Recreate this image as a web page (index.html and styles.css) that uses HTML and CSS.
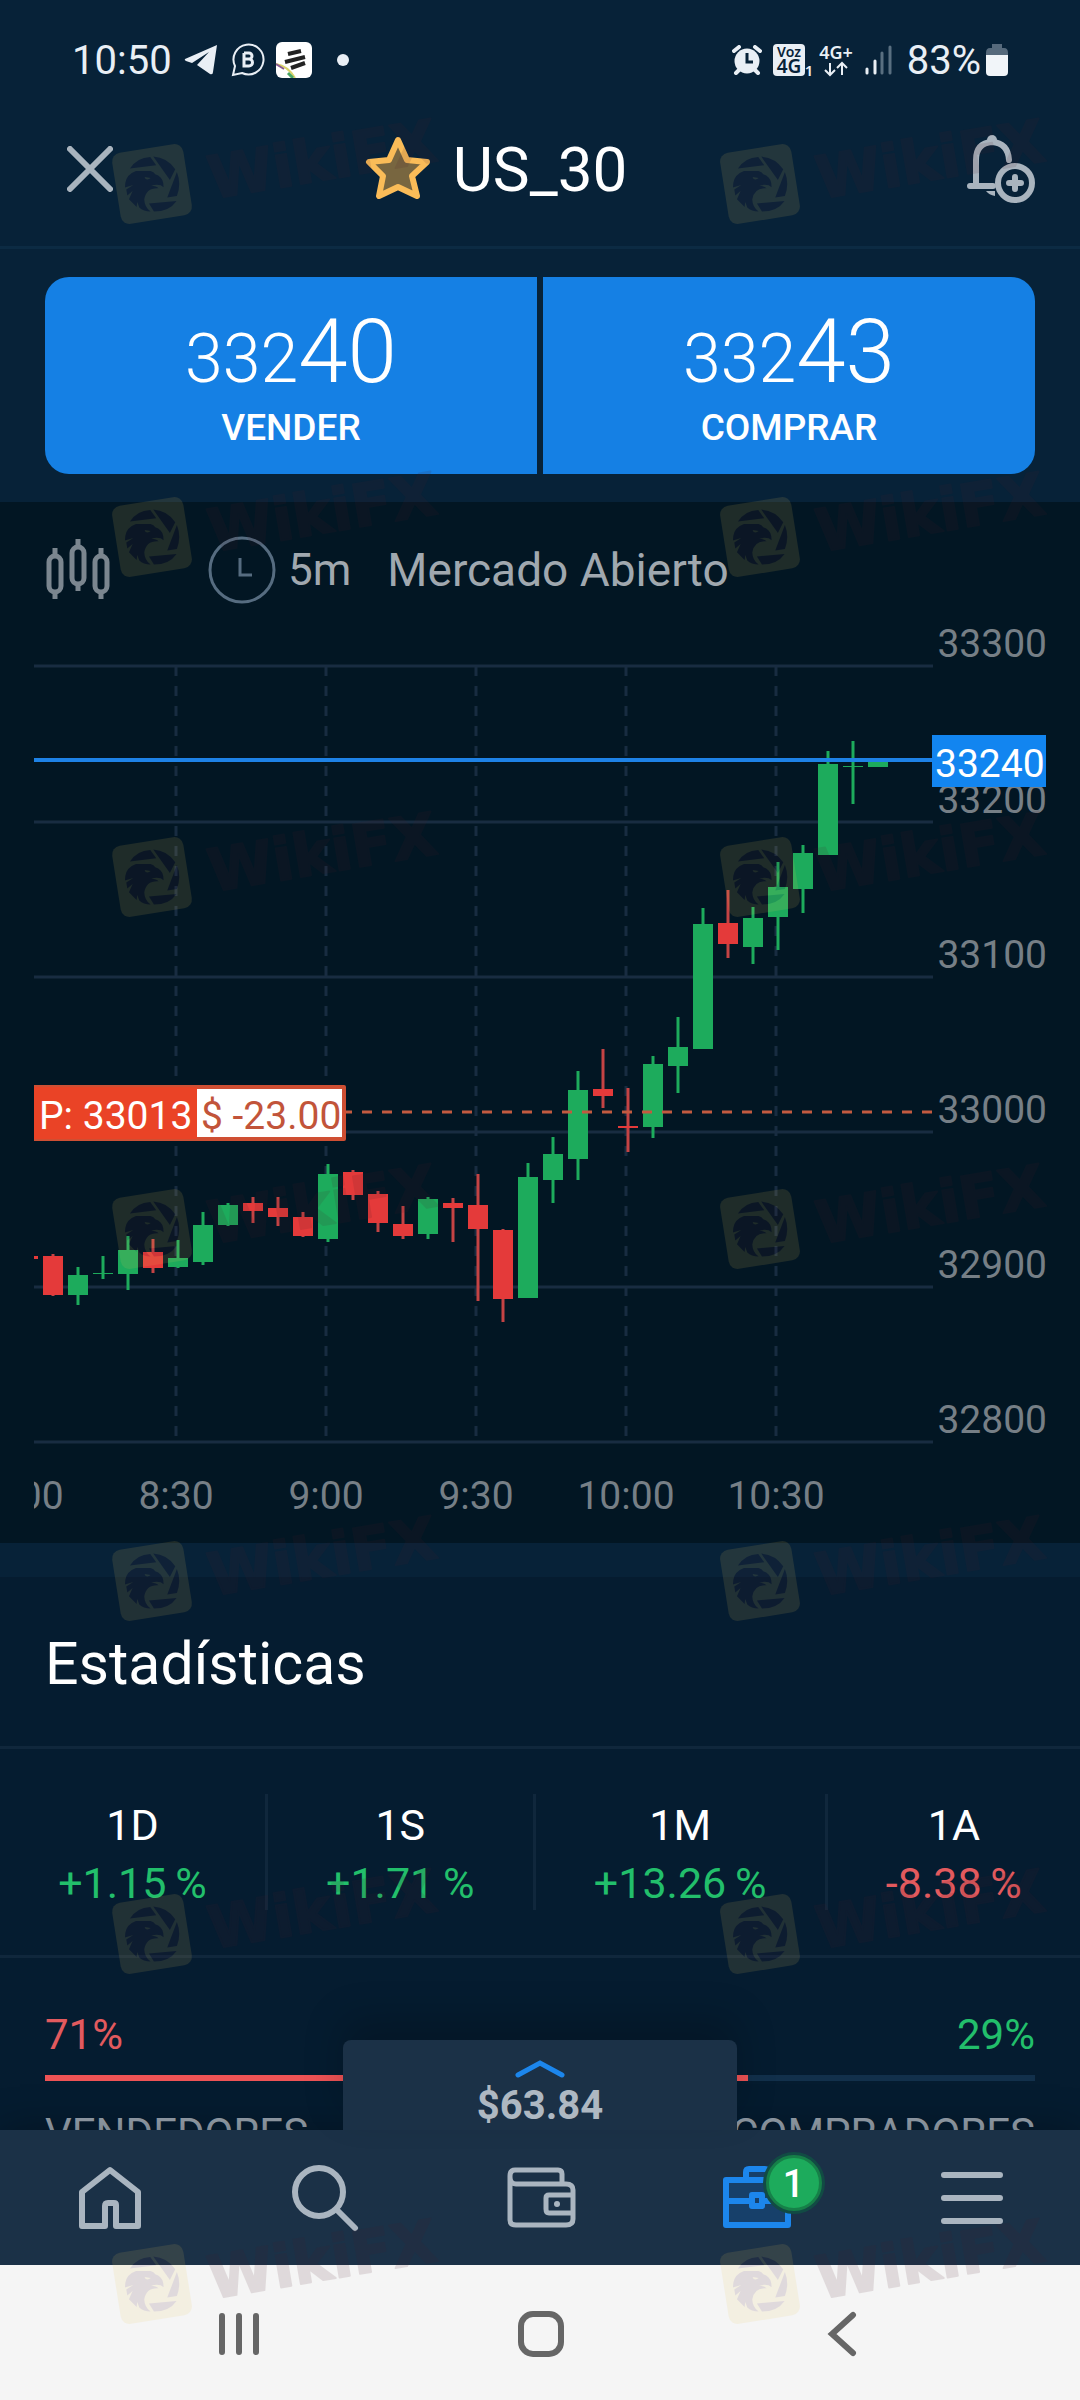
FILE: index.html
```html
<!DOCTYPE html>
<html lang="es">
<head>
    <meta charset="UTF-8">
    <meta name="viewport" content="width=device-width, initial-scale=1.0">
    <title>US_30</title>
    <link rel="stylesheet" href="styles.css">
</head>
<body>
    <div class="status-bar">
        <span class="clock">10:50</span>
        <svg class="telegram" width="34" height="32" viewBox="0 0 34 32"><path d="M33 1 1 15Q0 16 2 17L8 19 25 8 13 21 26 30Q29 31 29 28Z" fill="#e9eff5"/></svg>
        <svg class="whatsapp" width="34" height="34" viewBox="0 0 34 34" fill="none" stroke="#e9eff5" stroke-width="2"><path d="M2 32 4 23A15 15 0 1 1 11 30Z"/><path stroke-width="3" d="M13 10V23H18A3.500 3.500 0 0 0 18 16H13M13 10H18A3 3 0 0 1 18 16"/></svg>
        <svg width="36" height="36" viewBox="0 0 36 36"><rect width="36" height="36" rx="6" fill="#fff"/><path d="M12 12 25 9M9 20 29 15M15 26 29 21" stroke="#222" stroke-width="4"/><path d="M0 22Q12 24 19 36" fill="none" stroke="#d9d36a" stroke-width="2"/><path d="M0 22 8 27" stroke="#8a5a90" stroke-width="2"/><path d="M12 31 17 36" stroke="#4aa564" stroke-width="3"/></svg>
        <span class="dot"></span>
        <div class="status-right">
            <svg width="30" height="30" viewBox="0 0 30 30"><circle cx="15" cy="16" r="12.500" fill="#e9eff5"/><path d="M2 6 7 2M28 6 23 2M4 28 8 24M26 28 22 24" stroke="#e9eff5" stroke-width="4" stroke-linecap="round"/><path d="M15 8V17H21" fill="none" stroke="#072238" stroke-width="3"/></svg>
            <svg class="volte" width="40" height="33" viewBox="0 0 40 33"><rect width="32" height="32" rx="4" fill="#e9eff5"/><text x="16" y="13" class="volte-top">Voz</text><text x="16" y="29" class="volte-main">4G</text><text x="36" y="32" class="volte-sub">1</text></svg>
            <svg class="lte" width="34" height="33" viewBox="0 0 34 33"><text x="17" y="15" class="lte-text">4G+</text><path d="M11 19V31M6 26 11 31 16 26M23 31V19M18 24 23 19 28 24" fill="none" stroke="#e9eff5" stroke-width="2"/></svg>
            <svg class="signal" width="28" height="30" viewBox="0 0 28 30" stroke-width="3" stroke-linecap="round"><path d="M2 24V28M10 16V28" stroke="#e9eff5"/><path d="M17 8V28M25 2V28" stroke="#596f80"/></svg>
            <span class="battery-level">83%</span>
            <svg width="22" height="32" viewBox="0 0 22 32"><path d="M6 0H16V4H18Q22 4 22 9V12H0V9Q0 4 4 4H6Z" fill="#566a7c"/><path d="M0 11H22V28Q22 32 18 32H4Q0 32 0 28Z" fill="#f1f5f9"/></svg>
        </div>
    </div>

    <header class="header">
        <button class="close" aria-label="Cerrar">
            <svg width="46" height="46" viewBox="0 0 46 46"><path d="M3 3 43 43M43 3 3 43" stroke="#a9b4be" stroke-width="6" stroke-linecap="round"/></svg>
        </button>
        <h1>
            <svg width="66" height="66" viewBox="0 0 66 66"><path d="M33 4 42 24 62 26 47 40 52 60 33 51 14 60 18 40 4 26 24 24Z" fill="#786640" stroke="#fabc58" stroke-width="6" stroke-linejoin="round"/></svg>
            US_30
        </h1>
        <button class="alert" aria-label="Crear alerta">
            <svg width="70" height="70" viewBox="0 0 70 70" fill="none" stroke="#a9b4be" stroke-width="6"><path d="M27 52H4M10 52V26Q10 9 26 8 42 9 43 26" stroke-linecap="round"/><circle cx="26" cy="6" r="5" fill="#a9b4be" stroke="none"/><path d="M20 57Q23 61 29 62V57Z" fill="#a9b4be" stroke="none"/><circle cx="49" cy="49" r="17"/><path d="M49 43V55M43 49H55" stroke-linecap="round"/></svg>
        </button>
    </header>

    <main>
        <div class="prices">
            <button class="price sell"><span class="quote">332<b>40</b></span>VENDER</button>
            <button class="price buy"><span class="quote">332<b>43</b></span>COMPRAR</button>
        </div>

        <section class="chart">
            <div class="toolbar">
                <button class="chart-type" aria-label="Tipo de gráfico">
                    <svg width="64" height="62" viewBox="0 0 64 62" fill="none" stroke="#7b868f" stroke-width="5"><rect x="3" y="17" width="12" height="36" rx="6"/><rect x="26" y="8" width="12" height="37" rx="6"/><rect x="49" y="17" width="12" height="36" rx="6"/><path d="M9 9V17M9 53V60M32 0V8M32 45V52M55 9V17M55 53V60"/></svg>
                </button>
                <button class="interval">
                    <svg width="68" height="68" viewBox="0 0 68 68" fill="none" stroke="#566c80" stroke-width="3"><circle cx="34" cy="34" r="32"/><path d="M32 22V39H44"/></svg>
                    5m
                </button>
                <span class="market-state">Mercado Abierto</span>
            </div>
            <svg class="plot" viewBox="0 620 1080 923">
                <defs>
                    <clipPath id="plot-area"><rect x="34" y="620" width="1046" height="923"/></clipPath>
                </defs>
                <g clip-path="url(#plot-area)">
                    <path class="grid" d="M34 666H933M34 822H933M34 977H933M34 1132H933M34 1287H933M34 1442H933"/>
                    <path class="grid dashed" d="M176 666V1442M326 666V1442M476 666V1442M626 666V1442M776 666V1442"/>
                    <g id="candles"></g>
                    <path class="order-line" d="M342 1112H933"/>
                    <path class="price-line" d="M34 760H933"/>
                    <g class="axis">
                        <text x="1047" y="657">33300</text>
                        <text x="1047" y="813">33200</text>
                        <text x="1047" y="968">33100</text>
                        <text x="1047" y="1123">33000</text>
                        <text x="1047" y="1278">32900</text>
                        <text x="1047" y="1433">32800</text>
                    </g>
                    <g class="axis times">
                        <text x="26" y="1509">8:00</text>
                        <text x="176" y="1509">8:30</text>
                        <text x="326" y="1509">9:00</text>
                        <text x="476" y="1509">9:30</text>
                        <text x="626" y="1509">10:00</text>
                        <text x="776" y="1509">10:30</text>
                    </g>
                    <rect x="932" y="735" width="114" height="52" fill="#1285f0"/>
                    <text class="tag" x="935" y="777">33240</text>
                    <rect x="30" y="1085" width="316" height="56" rx="2" fill="#cf4f33"/>
                    <rect x="34" y="1087" width="163" height="52" fill="#ea4326"/>
                    <rect x="197" y="1089" width="145" height="48" fill="#fff"/>
                    <text class="tag" x="39" y="1129">P: 33013</text>
                    <text class="tag loss" x="201" y="1129">$ -23.00</text>
                </g>
            </svg>
        </section>

        <section class="stats">
            <h2>Estadísticas</h2>
            <dl class="periods">
                <div><dt>1D</dt><dd class="up">+1.15&thinsp;%</dd></div>
                <div><dt>1S</dt><dd class="up">+1.71&thinsp;%</dd></div>
                <div><dt>1M</dt><dd class="up">+13.26&thinsp;%</dd></div>
                <div><dt>1A</dt><dd class="down">-8.38&thinsp;%</dd></div>
            </dl>
            <div class="sentiment">
                <div class="row"><span class="down">71%</span><span class="up">29%</span></div>
                <div class="bar"><div class="bar-fill" style="width: 71%"></div></div>
                <div class="row muted"><span>VENDEDORES</span><span>COMPRADORES</span></div>
            </div>
        </section>
    </main>

    <nav class="tabs">
        <button class="balance">
            <svg width="50" height="20" viewBox="0 0 50 20"><path d="M3 16 25 4 47 16" fill="none" stroke="#1c86ec" stroke-width="5" stroke-linecap="round"/></svg>
            $63.84
        </button>
        <a href="#" aria-label="Inicio">
            <svg width="68" height="68" viewBox="0 0 68 68" fill="none" stroke="#aab5c0" stroke-width="6" stroke-linejoin="round"><path d="M6 28 34 6 62 28V62H40V41Q40 39 38 39H32Q29 39 29 42V62H6Z"/></svg>
        </a>
        <a href="#" aria-label="Buscar">
            <svg width="68" height="68" viewBox="0 0 68 68" fill="none" stroke="#aab5c0" stroke-width="6"><circle cx="28" cy="28" r="24"/><path d="M46 46 64 64" stroke-linecap="round"/></svg>
        </a>
        <a href="#" aria-label="Cartera">
            <svg width="70" height="68" viewBox="0 0 70 68" fill="none" stroke="#aab5c0" stroke-width="5"><path d="M56 20V10Q56 6 52 6H9Q4 6 4 12V56Q4 61 10 61H60Q67 61 67 55V26Q67 20 60 20H10Q4 20 4 13"/><path d="M67 31H43Q40 31 40 34V45Q40 49 43 49H67"/><circle cx="51" cy="40" r="3" fill="#aab5c0" stroke="none"/></svg>
        </a>
        <a href="#" class="portfolio" aria-label="Operaciones">
            <svg width="70" height="68" viewBox="0 0 70 68" fill="#17406a" stroke="#1c86ec" stroke-width="6" stroke-linejoin="round"><path d="M24 16V8Q24 5 27 5H43Q46 5 46 8V16"/><path d="M4 16H66V61H4ZM4 37H66"/><path d="M30 31H40V42H30Z"/></svg>
            <span class="badge">1</span>
        </a>
        <a href="#" aria-label="Menú">
            <svg width="68" height="68" viewBox="0 0 68 68" stroke="#aab5c0" stroke-width="6" stroke-linecap="round"><path d="M6 11H62M6 34H62M6 57H62"/></svg>
        </a>
    </nav>

    <div class="system-nav">
        <button aria-label="Recientes">
            <svg width="44" height="46" viewBox="0 0 44 46" stroke="#666" stroke-width="6" stroke-linecap="round"><path d="M5 5V41M22 5V41M39 5V41"/></svg>
        </button>
        <button aria-label="Inicio del teléfono">
            <svg width="46" height="46" viewBox="0 0 46 46"><rect x="3" y="3" width="40" height="40" rx="12" fill="none" stroke="#666" stroke-width="6"/></svg>
        </button>
        <button aria-label="Atrás">
            <svg width="46" height="46" viewBox="0 0 46 46"><path d="M33 4 12 23 33 42" fill="none" stroke="#666" stroke-width="6" stroke-linecap="round"/></svg>
        </button>
    </div>

    <!-- watermark over the whole screen -->
    <svg class="watermark" viewBox="0 0 1080 2400" aria-hidden="true">
        <defs>
            <g id="mark" opacity=".12">
                <g transform="rotate(-9)">
                    <rect x="-36" y="-36" width="72" height="72" rx="9" fill="#eac65a"/>
                </g>
                <g transform="translate(-72 -97) scale(.333)" fill="#4a1c34">
                    <path d="M150 245Q170 212 211 210L229 235Z"/>
                    <path d="M220 209Q262 212 286 247L270 279Z"/>
                    <path d="M291 255Q305 290 291 327L262 332Z"/>
                    <path d="M207 350 290 342Q268 374 222 374Z"/>
                    <path d="M136 288Q140 262 168 252L212 252Q222 254 226 262 246 268 250 288L251 301Q240 290 214 296 230 298 236 304 198 302 193 338 194 362 212 374 190 374 178 362L172 345 170 360 147 337 158 312 142 326 139 308 160 294 135 302Z"/>
                    <path d="M194 270 212 273Q205 280 197 276Z" fill="#eac65a"/>
                </g>
                <text transform="translate(60 15) rotate(-9.600)">WikiFX</text>
            </g>
            <g id="mark-row"><use href="#mark" x="152"/><use href="#mark" x="760"/></g>
        </defs>
        <use href="#mark-row" y="184"/>
        <use href="#mark-row" y="537"/>
        <use href="#mark-row" y="877"/>
        <use href="#mark-row" y="1229"/>
        <use href="#mark-row" y="1581"/>
        <use href="#mark-row" y="1934"/>
        <use href="#mark-row" y="2284"/>
    </svg>

    <script src="chart.js"></script>
</body>
</html>
```
FILE: styles.css
```css
* {
    box-sizing: border-box;
}
body {
    position: relative;
    display: flex;
    flex-direction: column;
    height: 100vh;
    margin: 0;
    background: #072238;
    color: #fff;
    font-family: Roboto, sans-serif;
    font-size: 42px;
}
svg {
    display: block;
    flex: none;
}
h1, h2, dl, dd {
    margin: 0;
    font-weight: 400;
}
button {
    padding: 0;
    border: none;
    background: none;
    color: inherit;
    font: inherit;
    cursor: pointer;
}

/* phone status bar */
.status-bar {
    display: flex;
    align-items: center;
    height: 120px;
    padding: 0 72px;
    color: #e9eff5;
    font-size: 40px;
}
.telegram {
    margin-left: 12px;
}
.whatsapp {
    margin: 0 11px 0 13px;
}
.dot {
    width: 12px;
    height: 12px;
    margin-left: 25px;
    border-radius: 50%;
    background: #e9eff5;
}
.status-right {
    display: flex;
    align-items: center;
    margin-left: auto;
}
.volte {
    margin-left: 11px;
    overflow: visible;
}
.volte text, .lte-text {
    font-family: "Noto Sans", sans-serif;
    font-weight: 600;
    text-anchor: middle;
}
.volte-top {
    font-size: 14px;
    fill: #072238;
}
.volte-main {
    font-size: 19px;
    fill: #072238;
}
.volte-sub {
    font-size: 15px;
    fill: #e9eff5;
}
.lte {
    margin: 0 12px 0 6px;
    overflow: visible;
}
.lte-text {
    font-size: 18px;
    fill: #e9eff5;
}
.signal {
    margin-right: 14px;
}
.battery-level {
    margin-right: 5px;
}

.header {
    display: flex;
    align-items: center;
    height: 129px;
    padding-bottom: 28px;
    border-bottom: 3px solid #0c2b43;
}
.header h1 {
    display: flex;
    flex: 1;
    align-items: center;
    justify-content: center;
    gap: 22px;
    font-size: 62px;
}
.close {
    width: 136px;
    padding-left: 67px;
}
.alert {
    width: 224px;
    padding-left: 110px;
}

main {
    flex: 1;
    min-height: 0;
    overflow: hidden;
}
.prices {
    display: flex;
    gap: 6px;
    padding: 28px 45px;
}
.price {
    display: flex;
    flex: 1;
    flex-direction: column;
    align-items: center;
    height: 197px;
    padding-top: 28px;
    background: #1580e4;
    font-size: 37px;
    font-weight: 500;
}
.sell {
    border-radius: 24px 0 0 24px;
}
.buy {
    border-radius: 0 24px 24px 0;
}
.quote {
    font-size: 68px;
    font-weight: 300;
    line-height: 94px;
}
.quote b {
    font-size: 89px;
    font-weight: 300;
}

.chart {
    background: #021623;
}
.toolbar {
    display: flex;
    align-items: center;
    padding: 34px 46px 16px;
    color: #a0a8af;
    font-size: 44px;
}
.interval {
    display: flex;
    align-items: center;
    gap: 12px;
    margin: 0 36px 0 98px;
}
.market-state {
    font-size: 46px;
}
.plot {
    width: 100%;
}
.grid {
    fill: none;
    stroke: #182c41;
    stroke-width: 3;
}
.dashed {
    stroke-dasharray: 10 10;
}
.order-line {
    stroke: #c25a40;
    stroke-width: 3;
    stroke-dasharray: 10 10;
}
.price-line {
    stroke: #1e82e6;
    stroke-width: 4;
}
.wick {
    stroke-width: 3;
}
.rise {
    fill: #1dab5c;
    stroke: #1dab5c;
}
.fall {
    fill: #e43a3a;
    stroke: #e43a3a;
}
.wick.fall {
    stroke: #c44344;
}
.body {
    stroke: none;
}
.axis text, .tag {
    font-size: 39px;
}
.axis text {
    fill: #767f86;
    text-anchor: end;
}
.axis.times text {
    text-anchor: middle;
}
.tag {
    fill: #fff;
}
.loss {
    fill: #c2543a;
}

.stats {
    margin-top: 34px;
    background: #051c30;
}
.stats h2 {
    padding: 52px 45px 47px;
    border-bottom: 3px solid #10273c;
    font-size: 59px;
    line-height: 70px;
}
.periods {
    display: flex;
    padding: 45px 0;
    border-bottom: 3px solid #10273c;
    font-size: 43px;
    line-height: 58px;
    text-align: center;
}
.periods div {
    flex: auto;
    padding-top: 2px;
    height: 116px;
    border-right: 3px solid #10273c;
}
.periods div:last-child {
    border-right: none;
}
.up {
    color: #22bf6b;
}
.down {
    color: #e25a5e;
}
.sentiment {
    padding: 48px 45px;
    line-height: 58px;
}
.row {
    display: flex;
    justify-content: space-between;
}
.bar {
    height: 6px;
    margin: 11px 0 24px;
    background: #12304b;
}
.bar-fill {
    height: 6px;
    background: #ee5355;
}
.muted {
    color: #98a3ae;
}

.tabs {
    position: relative;
    display: flex;
    height: 135px;
    padding-left: 2px;
    background: #1b3147;
    box-shadow: 0 0 40px rgba(0, 0, 0, 0.3);
}
.tabs a {
    position: relative;
    display: flex;
    flex: 1;
    align-items: center;
    justify-content: center;
}
.balance {
    position: absolute;
    bottom: 100%;
    left: calc(50% - 197px);
    display: flex;
    flex-direction: column;
    align-items: center;
    width: 394px;
    height: 90px;
    padding-top: 19px;
    border-radius: 8px 8px 0 0;
    background: #1b3147;
    box-shadow: 0 -20px 40px rgba(0, 0, 0, 0.2);
    color: #aeb8c2;
    font-size: 40px;
    font-weight: 700;
    line-height: 54px;
}
.badge {
    position: absolute;
    top: 25px;
    left: calc(50% + 9px);
    width: 56px;
    height: 56px;
    border: 3px solid #168048;
    border-radius: 50%;
    background: #1dab5c;
    box-shadow: 0 0 0 3px #124b44;
    color: #fff;
    font-size: 38px;
    font-weight: 500;
    line-height: 52px;
    text-align: center;
}

.system-nav {
    position: relative;
    display: flex;
    justify-content: space-around;
    height: 135px;
    padding: 2px 86px 0 88px;
    background: #f5f5f5;
}
.system-nav button {
    display: flex;
    flex: 1;
    align-items: center;
    justify-content: center;
}

.watermark {
    position: absolute;
    top: 0;
    left: 0;
    width: 100%;
    pointer-events: none;
}
.watermark text {
    fill: #4a1c28;
    stroke: #4a1c28;
    stroke-width: 2;
    stroke-linejoin: round;
    font-family: "DejaVu Sans", sans-serif;
    font-size: 59px;
    font-weight: 700;
}
```
FILE: chart.js
```js
// one entry per 5 minute candle: type, body top, body bottom, wick top, wick bottom
const candles = [
    ['fall', 1256, 1259, 1256, 1259],
    ['fall', 1256, 1295, 1254, 1296],
    ['rise', 1275, 1295, 1267, 1305],
    ['rise', 1273, 1274, 1256, 1279],
    ['rise', 1250, 1274, 1236, 1290],
    ['fall', 1252, 1268, 1239, 1273],
    ['rise', 1258, 1267, 1240, 1268],
    ['rise', 1225, 1262, 1212, 1265],
    ['rise', 1205, 1225, 1203, 1226],
    ['fall', 1203, 1211, 1197, 1223],
    ['fall', 1208, 1217, 1197, 1226],
    ['fall', 1217, 1236, 1212, 1237],
    ['rise', 1174, 1239, 1164, 1242],
    ['fall', 1172, 1195, 1170, 1200],
    ['fall', 1194, 1223, 1191, 1232],
    ['fall', 1224, 1236, 1206, 1239],
    ['rise', 1199, 1234, 1197, 1239],
    ['fall', 1203, 1208, 1198, 1242],
    ['fall', 1205, 1229, 1174, 1301],
    ['fall', 1230, 1299, 1229, 1322],
    ['rise', 1177, 1298, 1163, 1298],
    ['rise', 1154, 1180, 1137, 1203],
    ['rise', 1090, 1159, 1071, 1180],
    ['fall', 1089, 1096, 1049, 1108],
    ['fall', 1126, 1128, 1088, 1152],
    ['rise', 1064, 1127, 1056, 1138],
    ['rise', 1047, 1066, 1017, 1093],
    ['rise', 924, 1049, 908, 1049],
    ['fall', 923, 944, 890, 958],
    ['rise', 918, 947, 907, 964],
    ['rise', 887, 917, 862, 950],
    ['rise', 853, 889, 845, 913],
    ['rise', 764, 855, 751, 855],
    ['rise', 766, 767, 741, 804],
    ['rise', 762, 767, 762, 767]
];

const firstX = 28;
const step = 25;

document.getElementById('candles').innerHTML = candles.map(([type, top, bottom, high, low], i) => {
    const x = firstX + i * step;
    return `<path class="wick ${type}" d="M${x} ${high}V${low}"/>` +
        `<rect class="${type} body" x="${x - 10}" y="${top}" width="20" height="${bottom - top}"/>`;
}).join('');
```
